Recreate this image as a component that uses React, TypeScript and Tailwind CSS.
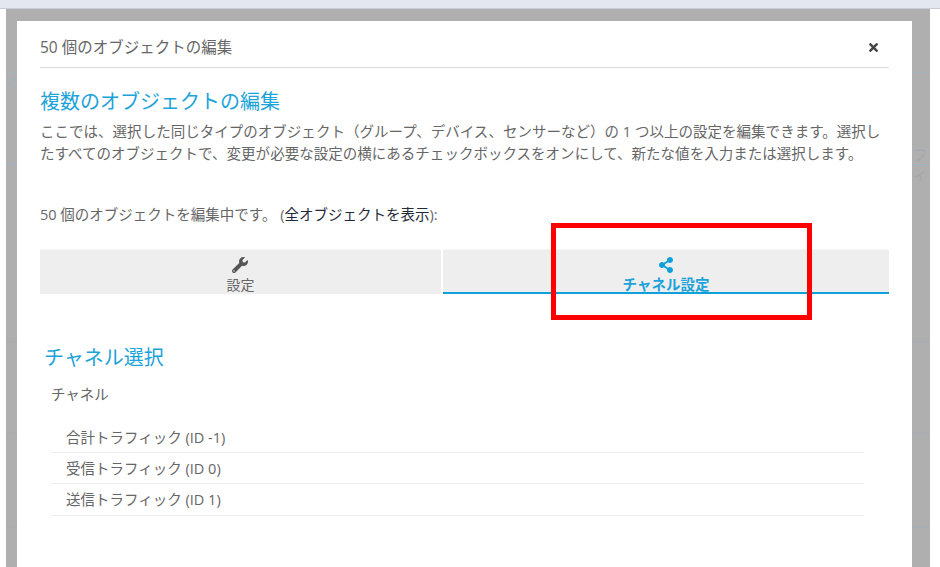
import { FaWrench, FaShareAlt, FaTimes } from "react-icons/fa";

const font = { fontFamily: '"Open Sans","Noto Sans CJK JP",sans-serif' };

const channels = ["合計トラフィック (ID -1)", "受信トラフィック (ID 0)", "送信トラフィック (ID 1)"];

export default function App() {
  return (
    <div
      className="relative flex flex-col w-[940px] h-[567px] overflow-hidden bg-white text-[#666666]"
      style={font}
    >
      <div className="h-[9px] shrink-0 bg-[#e3e7f0] border-b border-[#c9ccd3]" />
      <div className="flex flex-1 min-h-0">
        <div className="w-[6px] shrink-0 bg-white" />
        <div className="relative w-[924px] shrink-0 overflow-hidden bg-[#afafaf] pl-[11px] pr-[18px] pt-[12px]">
          <div className="absolute left-0 right-0 top-[63px] h-px bg-[#a6b4ba]" />
          <div className="absolute left-0 right-0 top-[155px] h-px bg-[#a0b4bf]" />
          <div className="absolute left-0 right-0 top-[332px] h-px bg-[#a4adb2]" />
          <div className="absolute left-0 right-0 top-[424px] h-px bg-[#a4adb2]" />
          <div className="absolute left-0 right-0 top-[518px] h-px bg-[#a4adb2]" />
          <svg className="absolute left-[1px] top-[64px]" width="10" height="14" viewBox="0 0 10 14" fill="none">
            <path d="M1 12 C5 11 8 7 10 2" stroke="#9fb2bb" strokeWidth="1.2" />
          </svg>
          <span className="absolute left-[907px] top-[136px] text-[14.5px] leading-5 text-[#a2a9ae]">フィ</span>
          <div className="relative h-full bg-white px-[23px]">
            <div className="flex h-[47px] items-center justify-between border-b border-[#d9d9d9] pt-[6px]">
              <span className="text-[15.5px] leading-5">50 個のオブジェクトの編集</span>
              <FaTimes className="mr-[9px] text-[13px] text-[#444444]" />
            </div>
            <h2 className="mt-[20px] text-[20px] leading-[28px] text-[#1ca3d9]">複数のオブジェクトの編集</h2>
            <p className="mt-[5px] text-[14.5px] leading-[22px] tracking-[0.02px]">
              ここでは、選択した同じタイプのオブジェクト（グループ、デバイス、センサーなど）の 1 つ以上の設定を編集できます。選択したすべてのオブジェクトで、変更が必要な設定の横にあるチェックボックスをオンにして、新たな値を入力または選択します。
            </p>
            <p className="mt-[40px] text-[14.5px] leading-5">
              50 個のオブジェクトを編集中です。 (<span className="text-[#1f2b3a]">全オブジェクトを表示</span>):
            </p>
            <div className="mt-[24px] flex h-[45px] gap-[2px]">
              <div className="flex w-[401px] flex-col items-center overflow-hidden border-t border-[#f6f6f6] bg-[#eeeeee] pt-[7px]">
                <FaWrench className="shrink-0 text-[16px] text-[#555555] -translate-x-[1px]" />
                <span className="mt-[2px] shrink-0 text-[14px] leading-5">設定</span>
              </div>
              <div className="relative flex flex-1 flex-col items-center overflow-hidden border-t border-t-[#f6f6f6] bg-[#eeeeee] pt-[7px]">
                <FaShareAlt className="shrink-0 text-[16px] text-[#0ea0da]" />
                <span className="mt-[2px] shrink-0 text-[14.5px] font-bold leading-5 text-[#1ca3d9]">チャネル設定</span>
                <div className="absolute bottom-0 left-0 right-0 h-[2px] bg-[#0ea0da]" />
              </div>
            </div>
            <div className="pl-[4px]">
              <h2 className="mt-[50px] text-[20px] leading-[28px] text-[#1ca3d9]">チャネル選択</h2>
              <div className="mt-[13px] pl-[7px] text-[14.5px] leading-5">チャネル</div>
            </div>
            <ul className="ml-[11px] mt-[17px] w-[813px]">
              {channels.map((c) => (
                <li key={c} className="h-[31px] border-b border-[#eeeeee] pl-[15px] text-[14.5px] leading-[31px] last:h-[32px]">
                  {c}
                </li>
              ))}
            </ul>
          </div>
        </div>
        <div className="flex-1 bg-white" />
      </div>
      <div className="absolute left-[551px] top-[223px] h-[97px] w-[261px] border-[5px] border-[#ff0000]" />
    </div>
  );
}
